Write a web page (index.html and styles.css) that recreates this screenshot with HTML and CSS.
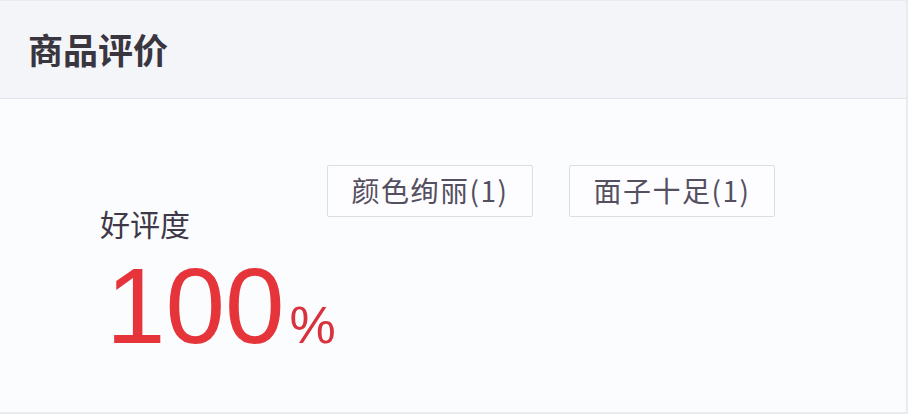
FILE: index.html
```html
<!DOCTYPE html>
<html lang="zh-CN">
<head>
<meta charset="utf-8">
<title>商品评价</title>
<link rel="stylesheet" href="styles.css">
</head>
<body>
<section class="card">
  <header class="card-head">
    <h2 class="card-title">商品评价</h2>
  </header>
  <div class="card-body">
    <div class="rate">
      <div class="rate-label">好评度</div>
      <div class="rate-value">100<span class="rate-pct">%</span></div>
    </div>
    <ul class="tags">
      <li class="tag">颜色绚丽(1)</li>
      <li class="tag">面子十足(1)</li>
    </ul>
  </div>
</section>
</body>
</html>
```
FILE: styles.css
```css
* { box-sizing: border-box; }
html, body { margin: 0; padding: 0; }
body {
  width: 908px;
  height: 414px;
  background: #fbfcfe;
  font-family: "Noto Sans CJK SC", "Noto Sans", sans-serif;
  overflow: hidden;
}
.card {
  width: 908px;
  height: 414px;
  border-top: 1px solid #e9ebef;
  border-right: 2px solid #e9ebef;
  border-bottom: 2px solid #e9ebef;
  background: #fbfcfe;
  display: flex;
  flex-direction: column;
}
.card-head {
  height: 98px;
  flex: none;
  background: #f4f5f8;
  border-bottom: 1px solid #dfe3ea;
  display: flex;
  align-items: center;
  padding-left: 28px;
}
.card-title {
  margin: 0;
  font-size: 35px;
  font-weight: 700;
  color: #3a363f;
  line-height: 1;
  padding-bottom: 2px;
}
.card-body {
  display: flex;
  align-items: flex-start;
  padding-left: 100px;
  padding-top: 66px;
}
.rate {
  width: 227px;
  display: flex;
  flex-direction: column;
  gap: 15px;
  padding-top: 43px;
}
.rate-label {
  font-size: 30px;
  line-height: 30px;
  color: #3e3848;
}
.rate-value {
  font-family: "Liberation Sans", Arial, sans-serif;
  font-size: 107px;
  line-height: 1;
  color: #e5353a;
  white-space: nowrap;
  padding-left: 6px;
}
.rate-pct {
  font-size: 52px;
  margin-left: 5px;
  color: #d8333c;
}
.tags {
  list-style: none;
  margin: 0;
  padding: 0;
  display: flex;
  gap: 36px;
}
.tag {
  width: 206px;
  height: 52px;
  border: 1px solid #dcdee4;
  border-radius: 2px;
  background: #fdfdff;
  display: flex;
  align-items: center;
  justify-content: center;
  font-size: 28px;
  color: #555060;
  letter-spacing: 1.5px;
  padding-bottom: 2px;
}
```
